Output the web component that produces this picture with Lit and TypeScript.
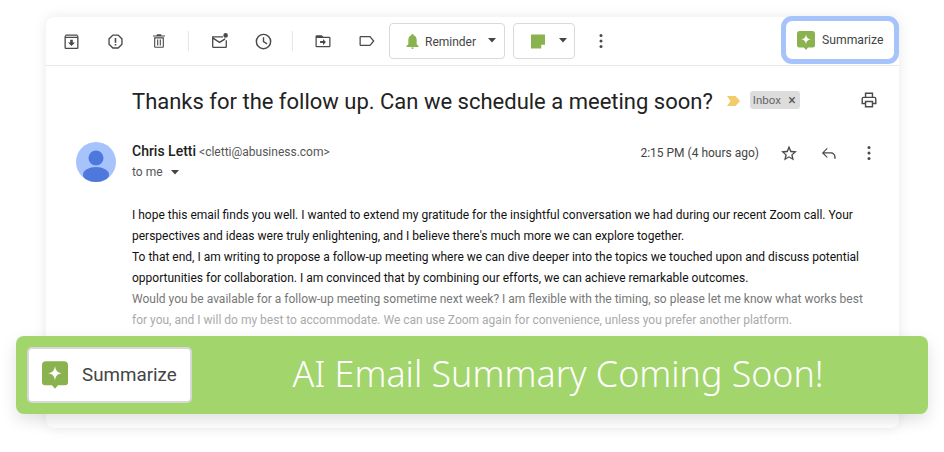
import { LitElement, html, css, svg } from "lit";
import { customElement } from "lit/decorators.js";

const ic = (body: unknown, size = 20, fill = "#4a4a4a") => html`<span class="slot"><svg width=${size} height=${size} viewBox="0 0 24 24" fill=${fill}>${body}</svg></span>`;

const sparkBubble = (w: number, h: number) => html`<svg width=${w} height=${h} viewBox="0 0 26 27.500">
  <path fill="#8ab34f" d="M4 0h18a4 4 0 0 1 4 4v17a3 3 0 0 1-3 3h-7l-3 3.400L10 24H3a3 3 0 0 1-3-3V4a4 4 0 0 1 4-4z"/>
  <path fill="#fff" d="M13 5c.8 4.600 2.400 6.200 7 7-4.600.8-6.200 2.400-7 7-.8-4.600-2.400-6.200-7-7 4.600-.8 6.200-2.400 7-7z"/>
</svg>`;

const caret = html`<svg width="8" height="5" viewBox="0 0 10 6"><path fill="#444" d="M0 0h10L5 5.500z"/></svg>`;

const kebab = ic(svg`<circle cx="12" cy="5.500" r="1.800"/><circle cx="12" cy="12" r="1.800"/><circle cx="12" cy="18.500" r="1.800"/>`);

@customElement("app-root")
export class AppRoot extends LitElement {
  static styles = css`
    :host { display: block; width: 944px; height: 452px; position: relative; overflow: hidden; background: #fff; font-family: Roboto, "Liberation Sans", sans-serif; color: #333; box-sizing: border-box; padding: 17px 45px 24px 46px; }
    .card { height: 411px; border-radius: 8px; background: #fff; box-shadow: 0 0 14px rgba(0,0,0,.09); position: relative; display: flex; flex-direction: column; }
    .toolbar { height: 48px; flex: none; border-bottom: 1px solid #e8e8e8; display: flex; align-items: center; padding-left: 13px; }
    .slot { width: 24px; height: 24px; flex: none; display: flex; align-items: center; justify-content: center; }
    .tools { display: flex; align-items: center; gap: 20px; }
    .sep { width: 1px; height: 20px; background: #e6e6e6; margin: 0 18px 0 17px; }
    .drop { height: 36px; box-sizing: border-box; border: 1px solid #d9d9d9; border-radius: 4px; display: flex; align-items: center; font-size: 12px; color: #444; margin-top: -1px; }
    .reminder { width: 116px; margin-left: 10px; padding-left: 16px; padding-top: 2px; }
    .reminder .bell { margin-right: 6px; }
    .reminder span { flex: 1; }
    .reminder svg:last-child { margin-right: 8px; margin-top: -3px; }
    .note { width: 62px; margin-left: 8px; padding-left: 17px; gap: 14px; padding-top: 2px; }
    .note svg:last-child { margin-top: -3px; }
    .more { margin-left: 14px; }
    .sum { margin-left: auto; margin-top: -2px; width: 118px; height: 48px; box-sizing: border-box; border: 5px solid #a6c3fb; border-radius: 11px; background: #fff; display: flex; align-items: center; gap: 7px; padding-left: 11px; font-size: 12.200px; color: #444; }
    .subject { display: flex; align-items: center; height: 70px; padding-left: 86px; box-sizing: border-box; }
    h1 { margin: 0; font-weight: 400; font-size: 22px; color: #222; }
    .imp { margin-left: 14px; margin-bottom: 1px; }
    .chip { margin-left: 10px; margin-bottom: 2px; height: 18px; width: 50px; box-sizing: border-box; padding: 0 4px 0 3px; background: #ddd; border-radius: 3px; font-size: 11.500px; color: #666; display: flex; align-items: center; justify-content: space-between; }
    .chip i { font-style: normal; font-size: 14px; color: #555; }
    .print { margin-left: auto; margin-right: 18px; margin-bottom: 2px; }
    .head { display: flex; padding-left: 30px; height: 40px; margin-top: 6px; }
    .avatar { flex: none; margin-right: 16px; }
    .who { font-size: 12px; color: #555; padding-top: 1px; white-space: nowrap; }
    .who b { font-size: 14px; font-weight: 500; color: #222; }
    .to { display: flex; align-items: center; gap: 8px; margin-top: 6px; font-size: 12px; color: #555; }
    .meta { margin-left: auto; display: flex; align-items: center; height: 22px; font-size: 12px; color: #444; padding-right: 18px; }
    .meta .star { margin-left: 18px; }
    .meta .reply { margin-left: 16px; }
    .meta .dots { margin-left: 16px; }
    .body { margin: 23px 0 0 86px; white-space: nowrap; font-size: 12px; line-height: 21.100px; color: #111; }
    .fade1 { color: #777; }
    .fade2 { color: #aaa; }
    .banner { position: absolute; left: 16px; top: 336px; width: 912px; height: 78px; border-radius: 8px; background: #a2d56b; box-shadow: 0 6px 16px rgba(0,0,0,.12); display: flex; align-items: center; box-sizing: border-box; padding-left: 11px; }
    .bbtn { flex: none; width: 165px; height: 56px; box-sizing: border-box; background: #fff; border: 2px solid #d8d8d8; border-radius: 5px; display: flex; align-items: center; gap: 14px; padding-left: 13px; font-size: 18.800px; color: #444; }
    .btext { flex: 1; text-align: center; padding-left: 4px; padding-right: 8px; padding-bottom: 5px; font-family: "Noto Sans", sans-serif; font-weight: 300; font-size: 35.800px; color: #fff; white-space: nowrap; }
  `;

  render() {
    return html`
      <div class="card">
        <div class="toolbar">
          <div class="tools">
            ${ic(svg`<path d="M5.500 4h13L20 6.200V19a1.500 1.500 0 0 1-1.500 1.500h-13A1.500 1.500 0 0 1 4 19V6.200zM5.500 8v11h13V8zM5.900 5.500l-.6 1h13.400l-.6-1z"/><path d="M10.500 10h3v3H16l-4 4-4-4h2.500z"/>`, 21)}
            ${ic(svg`<path fill-rule="evenodd" d="M8.300 3h7.400L21 8.300v7.400L15.700 21H8.300L3 15.700V8.300zM9 4.700 4.700 9v6L9 19.300h6l4.300-4.300V9L15 4.700z"/><path d="M11 7.500h2v6h-2zM11 15h2v2h-2z"/>`, 19)}
            ${ic(svg`<path fill-rule="evenodd" d="M9.500 3h5l1 1.500H20V6H4V4.500h4.500zM5.500 7h13v12.500a1.500 1.500 0 0 1-1.500 1.500H7a1.500 1.500 0 0 1-1.500-1.500zM7 8.500v11h10v-11z"/><path d="M9.500 10h1.500v8H9.500zM13 10h1.500v8H13z"/>`, 18)}
          </div>
          <div class="sep"></div>
          <div class="tools">
            ${ic(svg`<path fill-rule="evenodd" d="M3.500 6H16v1.500H5l7 4.500 6.500-4v2l-6.500 4L5 9.500V18h14v-7.500h1.500V18a1.500 1.500 0 0 1-1.500 1.500H5A1.500 1.500 0 0 1 3.500 18z"/><circle cx="19" cy="5" r="2.600"/>`, 21)}
            ${ic(svg`<path fill-rule="evenodd" d="M12 3a9 9 0 1 1 0 18 9 9 0 0 1 0-18zm0 1.700a7.300 7.300 0 1 0 0 14.600 7.300 7.300 0 0 0 0-14.600z"/><path d="M11.200 7h1.600v4.800l3.700 2.200-.8 1.300-4.500-2.700z"/>`, 21)}
          </div>
          <div class="sep"></div>
          <div class="tools">
            ${ic(svg`<path fill-rule="evenodd" d="M4.500 5h6l2 2h7A1.500 1.500 0 0 1 21 8.500V18a1.500 1.500 0 0 1-1.500 1.500h-15A1.500 1.500 0 0 1 3 18V6.500A1.500 1.500 0 0 1 4.500 5zm0 3.500V18h15V8.500z"/><path d="M12 9.500l3.500 3.700L12 17v-2.500H8.500v-2.600H12z"/>`, 20)}
            ${ic(svg`<path fill-rule="evenodd" d="M4.500 6h10.700c.5 0 1 .2 1.300.6L21 12l-4.500 5.400c-.3.400-.8.600-1.300.600H4.500A1.500 1.500 0 0 1 3 16.500v-9A1.500 1.500 0 0 1 4.500 6zm0 1.500v9h10.700l3.800-4.500-3.800-4.500z"/>`, 20)}
          </div>
          <div class="drop reminder">
            <svg class="bell" width="13" height="15" viewBox="0 0 14 16"><path fill="#8ab34f" d="M7 0a1.200 1.200 0 0 1 1.200 1.300C10.500 1.900 11.500 4 11.500 6.500V11l2 1.800V14H.5v-1.200L2.500 11V6.500C2.500 4 3.500 1.900 5.800 1.300A1.200 1.200 0 0 1 7 0zM5.500 14.500h3a1.500 1.500 0 0 1-3 0z"/></svg>
            <span>Reminder</span>
            ${caret}
          </div>
          <div class="drop note">
            <svg width="14" height="15" viewBox="0 0 15 15"><path fill="#8ab34f" d="M0 0h15v10.500L10.500 15H0z"/><path fill="#fff" d="M11 15v-4h4v.8L11.800 15z"/></svg>
            ${caret}
          </div>
          <div class="more">${kebab}</div>
          <div class="sum">${sparkBubble(18, 19)}<span>Summarize</span></div>
        </div>

        <div class="subject">
          <h1>Thanks for the follow up. Can we schedule a meeting soon?</h1>
          <svg class="imp" width="13" height="10" viewBox="0 0 13 10"><path fill="#f2cc6b" d="M0 0h8.500L13 5 8.500 10H0l3.500-5z"/></svg>
          <div class="chip">Inbox <i>×</i></div>
          <div class="print">${ic(svg`<path fill-rule="evenodd" d="M7 3h10v5h1.500A2.500 2.500 0 0 1 21 10.500V17h-4v4H7v-4H3v-6.500A2.500 2.500 0 0 1 5.500 8H7zm1.700 1.700V8h6.600V4.700zM5.500 9.700a.8.800 0 0 0-.8.8v4.800H7V13h10v2.300h2.300v-4.800a.8.800 0 0 0-.8-.8zM8.700 14.700v4.600h6.600v-4.600z"/>`)}</div>
        </div>

        <div class="head">
          <svg class="avatar" width="40" height="40" viewBox="0 0 40 40">
            <circle cx="20" cy="20" r="20" fill="#a6c3fb"/>
            <circle cx="20" cy="16" r="7.500" fill="#4f78dc"/>
            <ellipse cx="20" cy="32.500" rx="13" ry="7.500" fill="#4f78dc"/>
          </svg>
          <div>
            <div class="who"><b>Chris Letti</b> &lt;cletti@abusiness.com&gt;</div>
            <div class="to">to me ${caret}</div>
          </div>
          <div class="meta">
            <span>2:15 PM (4 hours ago)</span>
            <span class="star">${ic(svg`<path fill-rule="evenodd" d="M12 3l2.700 6.200 6.800.6-5.100 4.500 1.500 6.700L12 17.400 6.100 21l1.500-6.700L2.500 9.800l6.800-.6zm0 4.100L10.400 11l-4.100.4 3.100 2.700-.9 4L12 16l3.500 2.100-.9-4 3.100-2.700-4.100-.4z"/>`, 20)}</span>
            <span class="reply">${ic(svg`<path d="M10 5.500v1.700L6.200 11H14c3.500 0 6 2.500 6 6v2h-1.700v-2c0-2.600-1.800-4.300-4.300-4.300H6.200l3.800 3.800v1.700L3.500 11.900z"/>`)}</span>
            <span class="dots">${kebab}</span>
          </div>
        </div>

        <div class="body">
          I hope this email finds you well. I wanted to extend my gratitude for the insightful conversation we had during our recent Zoom call. Your<br>
          perspectives and ideas were truly enlightening, and I believe there's much more we can explore together.<br>
          To that end, I am writing to propose a follow-up meeting where we can dive deeper into the topics we touched upon and discuss potential<br>
          opportunities for collaboration. I am convinced that by combining our efforts, we can achieve remarkable outcomes.<br>
          <span class="fade1">Would you be available for a follow-up meeting sometime next week? I am flexible with the timing, so please let me know what works best</span><br>
          <span class="fade2">for you, and I will do my best to accommodate. We can use Zoom again for convenience, unless you prefer another platform.</span>
        </div>
      </div>

      <div class="banner">
        <div class="bbtn">${sparkBubble(26, 28)}<span>Summarize</span></div>
        <div class="btext">AI Email Summary Coming Soon!</div>
      </div>
    `;
  }
}
